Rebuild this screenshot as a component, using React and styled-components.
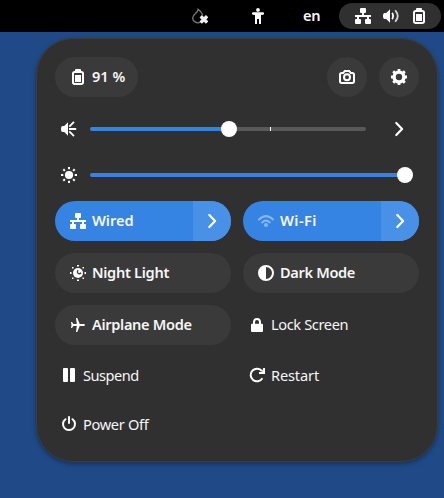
import React from "react";
import styled, { createGlobalStyle } from "styled-components";

const GlobalStyle = createGlobalStyle`
  * { box-sizing: border-box; }
  body {
    margin: 0;
    overflow: hidden;
    background: #204a87;
    color: #f6f6f6;
    font-family: "Noto Sans", sans-serif;
    font-size: 14.6px;
  }
`;

const Desktop = styled.main`
  display: flex;
  flex-direction: column;
  width: 444px;
  height: 498px;
  background: #204a87;
`;

const TopBar = styled.header`
  display: flex;
  align-items: center;
  justify-content: flex-end;
  height: 32px;
  padding-right: 3px;
  background: #000;
`;

const Indicator = styled.div`
  display: flex;
  align-items: center;
  margin-right: ${(p) => p.$gap}px;
`;

const StatusPill = styled.div`
  display: flex;
  align-items: center;
  gap: 12px;
  width: 102px;
  height: 26px;
  padding-left: 16px;
  border-radius: 13px;
  background: #303030;
`;

const Label = styled.span`
  display: inline-block;
  flex: none;
  width: ${(p) => (p.$width ? p.$width + "px" : "auto")};
  padding-bottom: ${(p) => (p.$low ? 0 : 2)}px;
  font-weight: ${(p) => (p.$regular ? 400 : 600)};
  letter-spacing: ${(p) => p.$track || 0}px;
  line-height: 20px;
  white-space: nowrap;
`;

const Panel = styled.section`
  width: 402px;
  height: 424px;
  margin: 6px 6px 0 36px;
  padding: 18px;
  border: 1px solid #3d3c3b;
  border-radius: 37px;
  background: #303030;
  box-shadow: 0 2px 5px rgba(0, 0, 0, 0.35);
`;

const Header = styled.div`
  display: flex;
  gap: 12px;
  height: 40px;
`;

const BatteryButton = styled.button`
  display: flex;
  align-items: center;
  gap: 6px;
  width: 83px;
  height: 40px;
  margin: 0 auto 0 0;
  padding: 0 0 0 15px;
  border: 0;
  border-radius: 20px;
  background: #3a3a3a;
  color: inherit;
  font: inherit;
`;

const RoundButton = styled.button`
  display: grid;
  place-items: center;
  width: 40px;
  height: 40px;
  padding: 0;
  border: 0;
  border-radius: 50%;
  background: #3a3a3a;
  color: inherit;
`;

const SliderRow = styled.div`
  display: flex;
  align-items: center;
  height: 46px;
  padding-left: 6px;
`;

const Sliders = styled.div`
  padding-top: 9px;
  height: 104px;
`;

const Track = styled.div`
  position: relative;
  width: ${(p) => p.$width}px;
  height: 4px;
  margin-left: 13px;
  border-radius: 2px;
  background: linear-gradient(to right, #3584e4 ${(p) => p.$value}px, #595959 ${(p) => p.$value}px);
`;

const Knob = styled.i`
  position: absolute;
  top: -6px;
  left: ${(p) => p.$at - 8}px;
  width: 16px;
  height: 16px;
  border-radius: 50%;
  background: #fff;
`;

const Tick = styled.i`
  position: absolute;
  top: 0;
  left: 180px;
  width: 1px;
  height: 4px;
  background: #fff;
`;

const ArrowButton = styled.button`
  display: grid;
  place-items: center;
  width: 38px;
  height: 40px;
  padding: 0;
  border: 0;
  background: ${(p) => (p.$filled ? "#4990e7" : "transparent")};
  color: inherit;
  margin-left: ${(p) => (p.$filled ? "auto" : "14px")};
`;

const Tiles = styled.div`
  display: grid;
  grid-template-columns: 176px 176px;
  gap: 12px;
`;

const Tile = styled.div`
  display: flex;
  align-items: center;
  gap: 6px;
  height: 40px;
  padding-left: 15px;
  overflow: hidden;
  border-radius: 20px;
  background: ${(p) => (p.$on ? "#3584e4" : "#3a3a3a")};
`;

const Action = styled.div`
  display: flex;
  align-items: center;
  gap: 6px;
  height: 40px;
  padding-left: 6px;
`;

const Actions = styled.div`
  display: grid;
  grid-template-columns: 176px 176px;
  column-gap: 12px;
  row-gap: 9px;
  padding-top: 10px;
`;

const Glyph = styled.svg`
  display: block;
  flex: none;
  width: 16px;
  height: 16px;
  color: #fff;
  fill: currentColor;
  opacity: ${(p) => p.$opacity || 1};
`;

const line = { fill: "none", stroke: "currentColor", strokeWidth: 2 };

const shapes = {
  wired: (
    <path d="M6 0h4q1 0 1 1v3q0 1-1 1H9v2h7v2h-2v2h1q1 0 1 1v3q0 1-1 1h-4q-1 0-1-1v-3q0-1 1-1h1V9H4v2h1q1 0 1 1v3q0 1-1 1H1q-1 0-1-1v-3q0-1 1-1h1V9H0V7h7V5H6q-1 0-1-1V1q0-1 1-1z" />
  ),
  volume: (
    <>
      <path d="M7 1.3v13.4L3.2 11H1.7Q0 11 0 8t1.7-3h1.5z" />
      <path {...line} strokeLinecap="round" strokeWidth="1.8" d="M9.5 5.5q1.4 2.5 0 5" />
      <path {...line} strokeLinecap="round" strokeWidth="1.8" opacity=".8" d="M12.6 2.9q4.3 5.1 0 10.2" />
    </>
  ),
  battery: (
    <>
      <path d="M5 2.2V1q0-1 1-1h4q1 0 1 1v1.2z" />
      <rect {...line} x="3" y="3" width="10" height="12" rx="1.7" />
      <path d="M5 6h6v7H5z" />
    </>
  ),
  person: (
    <>
      <circle cx="8" cy="1.9" r="1.9" />
      <path d="M3 4.3h10q1 0 1 1.2t-1 1.2l-2 .3v9H9v-5H7v5H5V7l-2-.3Q2 6.7 2 5.5t1-1.2z" />
    </>
  ),
  drop: (
    <>
      <path fill="none" stroke="#777" strokeWidth="1.3" d="M8.5 14.2q-3 1.300-5.500-.3Q.5 12.500.7 9.800 1 7.500 3.500 5.500 5.900 3.700 6.100 1.200 9.500 3.500 10.800 7" />
      <path fill="none" stroke="#eee" strokeWidth="3.4" d="M8.700 8.200l6.400 6.400M15.100 8.200l-6.400 6.400" />
    </>
  ),
  camera: (
    <>
      <path {...line} d="M2.700 4H4.200L5.800 2h4.400L11.800 4h1.500q1.700 0 1.700 1.700v6.600q0 1.700-1.700 1.700H2.700Q1 14 1 12.300V5.700Q1 4 2.700 4z" />
      <circle {...line} cx="8" cy="8.2" r="3" />
    </>
  ),
  gear: (
    <>
      <circle {...line} strokeWidth="3.4" cx="8" cy="8" r="4.9" />
      <path fill="none" stroke="currentColor" strokeWidth="2.8" d="M8 0v3M8 13v3M0 8h3M13 8h3M2.200 2.200l2 2M11.800 11.800l2 2M13.800 2.200l-2 2M4.200 11.800l-2 2" />
    </>
  ),
  loud: (
    <>
      <path d="M7 1.300v13.400L3.200 11H1.700Q0 11 0 8t1.700-3h1.500z" />
      <path {...line} strokeWidth="1.8" d="M8 8h7.200M8.300 5.700L13 .9M8.300 10.300L13 15.100" />
    </>
  ),
  sun: (
    <>
      <circle cx="8" cy="8" r="4.1" />
      <path {...line} d="M8 0v2.300M8 13.700V16M0 8h2.300M13.700 8H16M2.300 2.300l1.600 1.600M12.100 12.100l1.600 1.600M13.700 2.300l-1.600 1.600M3.900 12.100l-1.600 1.600" />
    </>
  ),
  arrow: <path {...line} strokeWidth="2.2" strokeLinecap="round" strokeLinejoin="round" d="M5.300 2l5.800 6-5.800 6" />,
  wifi: (
    <>
      <path {...line} strokeLinecap="round" d="M1 6.500q7-6.800 14 0M4.200 9.400q3.800-3.500 7.600 0" />
      <circle cx="8" cy="12" r="2" />
    </>
  ),
  night: (
    <>
      <circle cx="8" cy="8" r="5" />
      <path fill="none" stroke="#3a3a3a" strokeWidth="1.3" d="M8 5.200Q6.700 7 8 8.300q1.600 1.200 3.200-.5" />
      <path d="M7 0h2v1.500H7zM7 14.500h2V16H7zM0 7h1.500v2H0zM14.500 7H16v2h-1.500zM2 2h1.500v1.500H2zM12.500 2H14v1.500h-1.500zM2 12.500h1.500V14H2zM12.500 12.500H14V14h-1.500z" />
    </>
  ),
  dark: (
    <>
      <circle {...line} cx="8" cy="8" r="7" />
      <path d="M8 1v14A7 7 0 0 1 8 1z" />
    </>
  ),
  plane: <path d="M6 1h1.300L9.700 7h3.800Q15 7.200 15 8t-1.500 1H9.700L7.300 15H6L6.800 9H3.400L2 11H1L1.500 8 1 5h1l1.400 2h3.400z" />,
  lock: (
    <>
      <path {...line} d="M5 8V5.300Q5 2 8 2t3 3.300V8" />
      <rect x="2" y="6.7" width="12" height="8.3" rx="1" />
    </>
  ),
  restart: (
    <>
      <path {...line} d="M13 4.200A6.300 6.300 0 1 0 13.400 11.200" />
      <path d="M16 1v6h-6V5h3l1.200-4z" />
    </>
  ),
  pause: <path d="M3 1h3q1 0 1 1v12q0 1-1 1H3q-1 0-1-1V2q0-1 1-1zm7 0h3q1 0 1 1v12q0 1-1 1h-3q-1 0-1-1V2q0-1 1-1z" />,
  power: (
    <>
      <path {...line} strokeLinecap="round" d="M4.500 3.200a6 6 0 1 0 7 0" />
      <path {...line} strokeLinecap="round" d="M8 1v6" />
    </>
  ),
};

function Icon({ name, opacity }) {
  return (
    <Glyph viewBox="0 0 16 16" $opacity={opacity} aria-hidden="true">
      {shapes[name]}
    </Glyph>
  );
}

const tiles = [
  { icon: "wired", label: "Wired", on: true, track: -0.05 },
  { icon: "wifi", label: "Wi-Fi", on: true, dim: 0.4, track: 0.45 },
  { icon: "night", label: "Night Light", track: -0.3 },
  { icon: "dark", label: "Dark Mode", track: -0.35 },
  { icon: "plane", label: "Airplane Mode", track: -0.33 },
];

const actions = [
  { icon: "pause", label: "Suspend", track: -0.5 },
  { icon: "restart", label: "Restart", track: -0.15 },
  { icon: "power", label: "Power Off", track: -0.33 },
];

export default function App() {
  return (
    <Desktop>
      <GlobalStyle />
      <TopBar>
        <Indicator $gap={42}><Icon name="drop" /></Indicator>
        <Indicator $gap={37}><Icon name="person" /></Indicator>
        <Indicator $gap={19}><Label $width={17} $track={-0.3}>en</Label></Indicator>
        <StatusPill>
          <Icon name="wired" />
          <Icon name="volume" />
          <Icon name="battery" />
        </StatusPill>
      </TopBar>
      <Panel>
        <Header>
          <BatteryButton><Icon name="battery" /><Label>91 %</Label></BatteryButton>
          <RoundButton aria-label="Screenshot"><Icon name="camera" /></RoundButton>
          <RoundButton aria-label="Settings"><Icon name="gear" /></RoundButton>
        </Header>
        <Sliders>
          <SliderRow>
            <Icon name="loud" />
            <Track $width={276} $value={139}><Tick /><Knob $at={139} /></Track>
            <ArrowButton aria-label="Sound output"><Icon name="arrow" /></ArrowButton>
          </SliderRow>
          <SliderRow>
            <Icon name="sun" />
            <Track $width={323} $value={323}><Knob $at={315} /></Track>
          </SliderRow>
        </Sliders>
        <Tiles>
          {tiles.map((t) => (
            <Tile key={t.label} $on={t.on}>
              <Icon name={t.icon} opacity={t.dim} />
              <Label $track={t.track}>{t.label}</Label>
              {t.on && <ArrowButton $filled aria-label={t.label + " menu"}><Icon name="arrow" /></ArrowButton>}
            </Tile>
          ))}
          <Action><Icon name="lock" /><Label $regular $track={-0.37}>Lock Screen</Label></Action>
        </Tiles>
        <Actions>
          {actions.map((a) => (
            <Action key={a.label}><Icon name={a.icon} /><Label $regular $low $track={a.track}>{a.label}</Label></Action>
          ))}
        </Actions>
      </Panel>
    </Desktop>
  );
}
